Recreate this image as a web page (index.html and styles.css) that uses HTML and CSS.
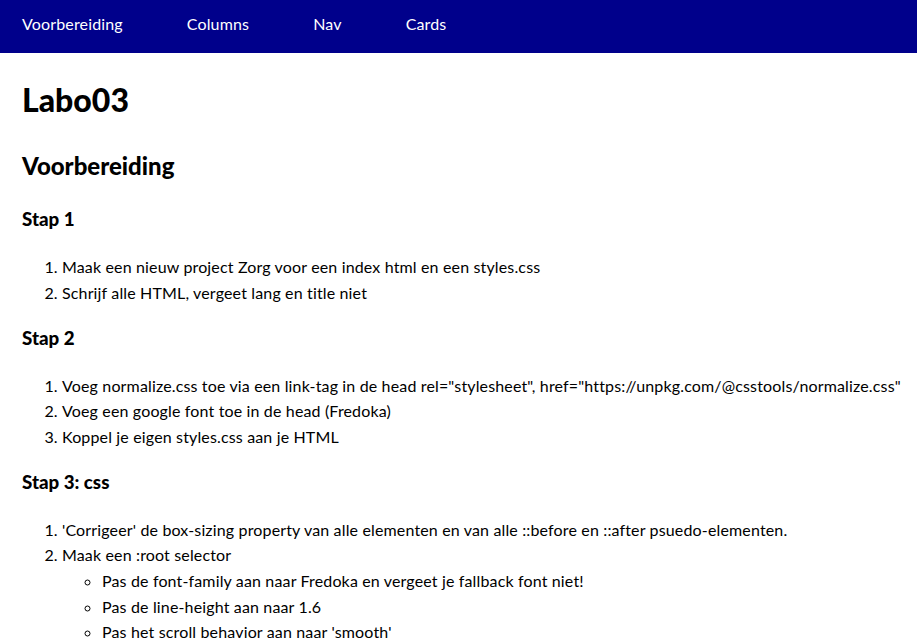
FILE: index.html
```html
<!DOCTYPE html>
<html lang="nl">
<head>
  <meta charset="UTF-8">
  <meta name="viewport" content="width=device-width, initial-scale=1.0">
  <title>Labo03</title>
  <link rel="stylesheet" href="styles.css">
</head>
<body>
  <nav class="main-nav">
    <a href="#voorbereiding">Voorbereiding</a>
    <a href="#columns">Columns</a>
    <a href="#nav">Nav</a>
    <a href="#cards">Cards</a>
  </nav>

  <main class="content">
    <h1>Labo03</h1>

    <section id="voorbereiding">
      <h2>Voorbereiding</h2>

      <h3>Stap 1</h3>
      <ol>
        <li>Maak een nieuw project Zorg voor een index html en een styles.css</li>
        <li>Schrijf alle HTML, vergeet lang en title niet</li>
      </ol>

      <h3>Stap 2</h3>
      <ol>
        <li>Voeg normalize.css toe via een link-tag in de head rel="stylesheet", href="https://unpkg.com/@csstools/normalize.css"</li>
        <li>Voeg een google font toe in de head (Fredoka)</li>
        <li>Koppel je eigen styles.css aan je HTML</li>
      </ol>

      <h3>Stap 3: css</h3>
      <ol>
        <li>'Corrigeer' de box-sizing property van alle elementen en van alle ::before en ::after psuedo-elementen.</li>
        <li>Maak een :root selector
          <ul>
            <li>Pas de font-family aan naar Fredoka en vergeet je fallback font niet!</li>
            <li>Pas de line-height aan naar 1.6</li>
            <li>Pas het scroll behavior aan naar 'smooth'</li>
          </ul>
        </li>
      </ol>
    </section>
  </main>
</body>
</html>
```

FILE: styles.css
```css
*, *::before, *::after {
  box-sizing: border-box;
}

:root {
  font-family: 'Lato', sans-serif;
  line-height: 1.6;
  scroll-behavior: smooth;
}

body {
  margin: 0;
  color: #000;
  background-color: #fff;
  letter-spacing: 0.15px;
}

h1, h2, h3 {
  font-family: 'Lato', sans-serif;
  font-weight: 900;
  letter-spacing: 0;
}

.main-nav {
  display: flex;
  gap: 64px;
  height: 53px;
  padding: 11px 22px;
  background-color: #00008b;
}

.main-nav a {
  color: #fff;
  text-decoration: none;
}

.content {
  padding-left: 22px;
}
```
